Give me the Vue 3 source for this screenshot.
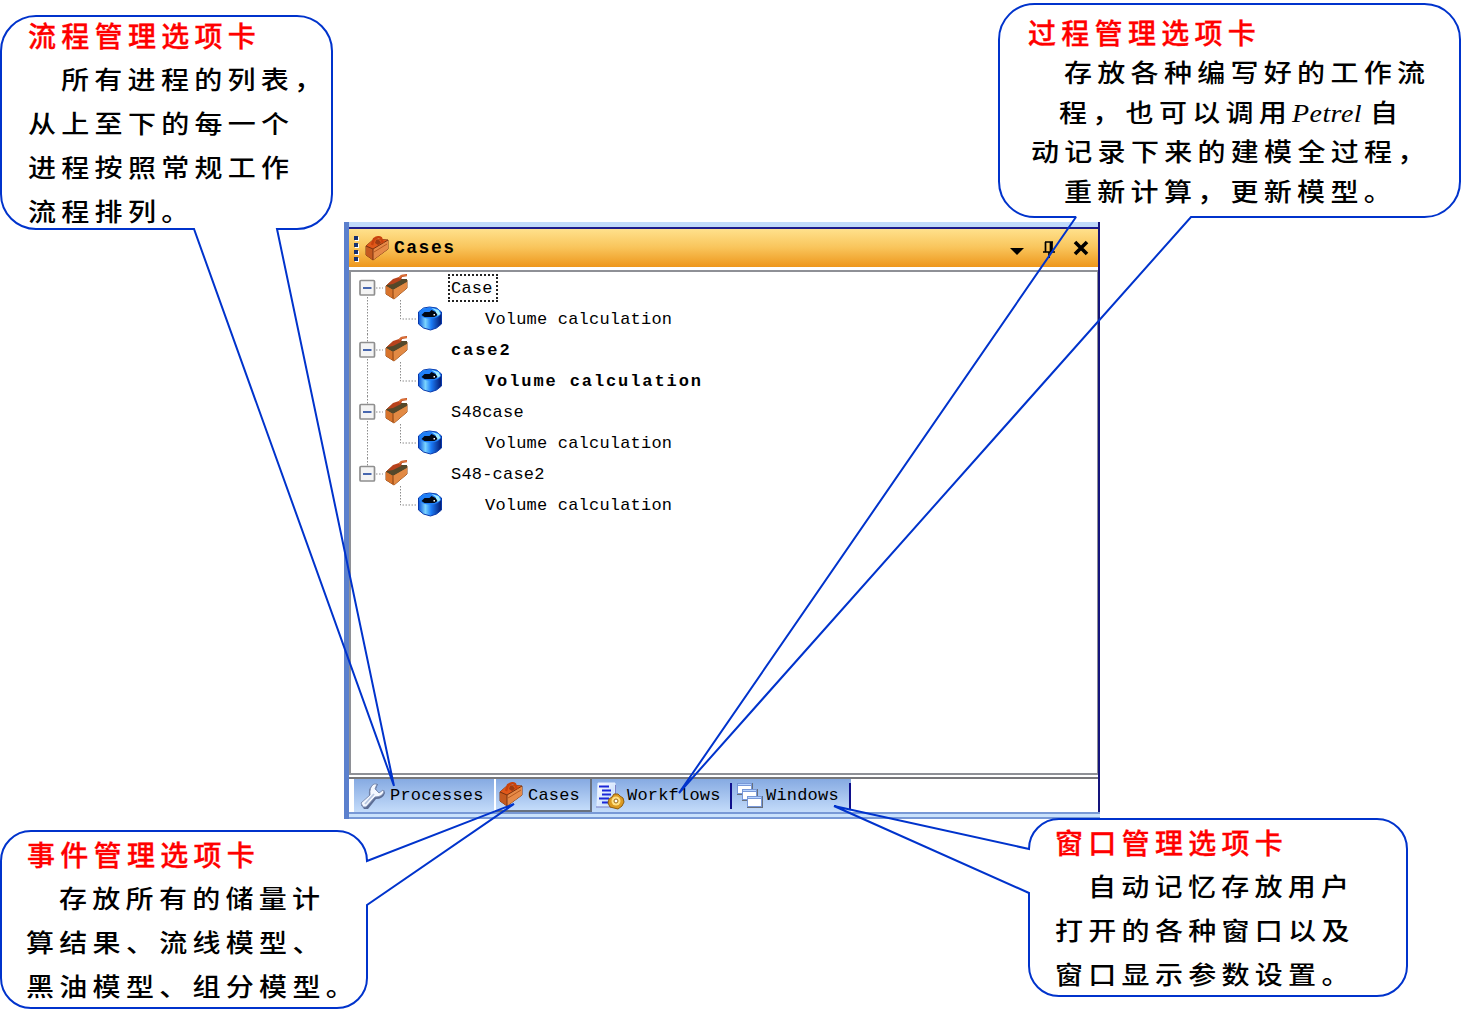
<script setup>
const cases = [
  { name: 'Case', focused: true },
  { name: 'case2', bold: true },
  { name: 'S48case' },
  { name: 'S48-case2' }
]

const callouts = [
  {
    id: 'process', left: 28, top: 14, title: '流程管理选项卡', titleHeight: 43, lineHeight: 44,
    lines: [
      { text: '所有进程的列表，', indent: 33 },
      { text: '从上至下的每一个', indent: 0 },
      { text: '进程按照常规工作', indent: 0 },
      { text: '流程排列。', indent: 0 }
    ]
  },
  {
    id: 'workflow', left: 1028, top: 11, title: '过程管理选项卡', titleHeight: 42, lineHeight: 39.7,
    lines: [
      { text: '存放各种编写好的工作流', indent: 36 },
      { text: '程，也可以调用', latin: 'Petrel', tail: '自', indent: 31 },
      { text: '动记录下来的建模全过程，', indent: 3 },
      { text: '重新计算，更新模型。', indent: 36 }
    ]
  },
  {
    id: 'event', left: 27, top: 833, title: '事件管理选项卡', titleHeight: 43, lineHeight: 44,
    lines: [
      { text: '存放所有的储量计', indent: 32 },
      { text: '算结果、流线模型、', indent: -1 },
      { text: '黑油模型、组分模型。', indent: -1 }
    ]
  },
  {
    id: 'window', left: 1055, top: 821, title: '窗口管理选项卡', titleHeight: 43, lineHeight: 44,
    lines: [
      { text: '自动记忆存放用户', indent: 33 },
      { text: '打开的各种窗口以及', indent: 0 },
      { text: '窗口显示参数设置。', indent: 0 }
    ]
  }
]
</script>

<template>
  <main class="slide">
    <svg class="symbols" width="0" height="0">
      <defs>
        <linearGradient id="drum" x1="0" x2="1" y1="0" y2="0">
          <stop offset="0" stop-color="#0a50d8" />
          <stop offset=".3" stop-color="#7ad4ff" />
          <stop offset=".55" stop-color="#1c7cf8" />
          <stop offset="1" stop-color="#02186e" />
        </linearGradient>
        <linearGradient id="page" x1="0" x2="1" y1="0" y2="1">
          <stop offset="0" stop-color="#ffffff" />
          <stop offset="1" stop-color="#b4d2fa" />
        </linearGradient>
      </defs>
      <symbol id="toolbox" viewBox="0 0 24 25">
        <path d="M1 10 L9 3 L23 4 L23 13 L8 24 L1 19 Z" fill="#d4692a" stroke="#7e3a18" stroke-width="1" />
        <path d="M1 10 L9 3 L23 4 L8 13 Z" fill="#e0581a" />
        <path d="M1 10 L8 13 L8 24 L1 19 Z" fill="#c45a20" />
        <path d="M8 13 L23 4 L23 13 L8 24 Z" fill="#e68a48" />
        <path d="M1 10 L8 13 L23 4 M8 13 V24" fill="none" stroke="#7a3210" stroke-width="1" />
        <path d="M9 16 L22 8" stroke="#b85a20" stroke-width="1" />
        <path d="M7 9 L9 3 Q13 0 16 2 L18 7" fill="none" stroke="#c8420e" stroke-width="2.4" />
        <path d="M10 7 L11 4 Q13 3 15 5 L16 7 L13 9 Z" fill="#9c3c14" />
      </symbol>
      <symbol id="toolbox-open" viewBox="0 0 24 26">
        <path d="M1 12 L8 6 L22 6 L22 14 L9 25 L1 20 Z" fill="#d87a34" stroke="#8a4414" stroke-width="1" />
        <path d="M1 12 L9 5 L22 5 L22 8 L8 16 Z" fill="#54482a" />
        <path d="M1 12 L8 16 L9 25 L1 20 Z" fill="#d8742c" />
        <path d="M8 16 L22 8 L22 14 L9 25 Z" fill="#e28a44" />
        <path d="M8 16 V24" stroke="#8a4414" stroke-width="1" />
        <path d="M2 11 L8 5 L14 3 L16 1 L22 0 L22 2 L17 3 L16 6 L8 10 Z" fill="#b8421c" />
        <path d="M14 4 L17 1.500 L22 1.500" fill="none" stroke="#dc7034" stroke-width="1.600" />
      </symbol>
      <symbol id="drum-icon" viewBox="0 0 25 25">
        <path d="M1 6 L6 2 L12 1 L19 2 L24 6 L24 18 L19 22 L13 24 L6 22 L1 18 Z" fill="url(#drum)" stroke="#0838ac" stroke-width="1" />
        <ellipse cx="12.500" cy="7" rx="11" ry="5.500" fill="#2080f8" />
        <path d="M14 2 L21 4 L23 8 L20 10 L18 5 Z" fill="#9fecff" />
        <path d="M4 9 L7 6 L12 6 L14 4 L18 6 L20 9 L17 11 L7 11 Z" fill="#020813" />
        <rect x="16" y="8" width="1.500" height="1.500" fill="#fff" />
      </symbol>
    </svg>

    <section class="panel">
      <div class="window-edge"></div>
      <header class="titlebar">
        <span class="grip"><i v-for="n in 4" :key="n"></i></span>
        <svg class="title-icon" width="24" height="25"><use href="#toolbox" /></svg>
        <h1>Cases</h1>
        <svg class="controls" width="90" height="36" viewBox="0 0 90 36">
          <path d="M8 18 H22 L15 25 Z" fill="#000" />
          <path d="M43 12 H51 M43.500 12 V22 M50 12 V22 M48.500 12 V22 M41 22 H53 M47 22 V28" fill="none" stroke="#000" stroke-width="1.700" />
          <path d="M73 12 L85 24 M85 12 L73 24" stroke="#000" stroke-width="3.600" />
        </svg>
      </header>

      <div class="list">
        <div v-for="(item, index) in cases" :key="item.name" class="case" :class="{ bold: item.bold }">
          <div class="row">
            <svg width="100" height="31" viewBox="0 0 100 31">
              <g fill="none" stroke="#8c8c8c" stroke-dasharray="1.500 1.500">
                <path v-if="index > 0" d="M16.500 0 V8" />
                <path v-if="index < cases.length - 1" d="M16.500 25 V31" />
                <path d="M25 16 H32" />
                <path d="M49.500 28 V31" />
              </g>
              <rect x="9" y="8.500" width="14.500" height="14.500" rx="1" fill="#f4f4f4" stroke="#8f8f8f" stroke-width="1.700" />
              <path d="M12 16 H20.500" stroke="#3457a8" stroke-width="1.800" />
              <use href="#toolbox-open" x="34" y="2" width="24" height="26" />
            </svg>
            <span :class="{ focused: item.focused }">{{ item.name }}</span>
          </div>
          <div class="row">
            <svg width="134" height="31" viewBox="0 0 134 31">
              <g fill="none" stroke="#8c8c8c" stroke-dasharray="1.500 1.500">
                <path v-if="index < cases.length - 1" d="M16.500 0 V31" />
                <path d="M49.500 0 V16 H66" />
              </g>
              <use href="#drum-icon" x="66.500" y="3" width="25" height="25" />
            </svg>
            <span>Volume calculation</span>
          </div>
        </div>
      </div>

      <nav class="tabs">
        <div class="tab processes">
          <svg width="28" height="28" viewBox="0 0 28 28">
            <path d="M5 27 L2 23 L10 14 Q9 5 15 2 L19 2 L17 7 L20 11 L25 8 L26 11 Q24 17 17 17 L9 27 Z" fill="#5c6d94" />
            <path d="M4 25 L2 21 L11 13 Q10 5 15 2 L18 2 L16 7 L20 11 L24 8 L25 10 Q23 15 16 15 L7 25 Z" fill="#f4f8ff" stroke="#8090b4" stroke-width="1" />
            <path d="M6 22 L15 12" stroke="#b6c5e0" stroke-width="1.800" />
          </svg>
          <span>Processes</span>
        </div>
        <div class="tab active">
          <svg width="24" height="25"><use href="#toolbox" /></svg>
          <span>Cases</span>
        </div>
        <div class="tab workflows">
          <svg width="30" height="28" viewBox="0 0 30 28">
            <path d="M3 1 H20 V24 H2 Z" fill="url(#page)" stroke="#e4efff" />
            <path d="M4 4.500 H14 M7 8.500 H16 M7 12.500 H16 M4 16.500 H14 M7 20.500 H16" stroke="#1b28d8" stroke-width="2" />
            <path d="M1 25 H16 M20.500 3 V12" stroke="#7c82c8" />
            <path d="M19 12 L23 12 L25 14 L28 16 L29 20 L27 24 L23 27 L19 26 L15 25 L13 21 L14 17 L17 15 Z" fill="#dc9a22" stroke="#8e5c0c" />
            <circle cx="21" cy="19" r="4.500" fill="#ffe184" />
            <circle cx="21" cy="19" r="2" fill="#fff" stroke="#9a6410" />
          </svg>
          <span>Workflows</span>
        </div>
        <div class="tab windows">
          <svg width="28" height="28" viewBox="0 0 28 28">
            <g v-for="(p, i) in [[1, 1], [6, 7], [11, 14]]" :key="i" :transform="`translate(${p[0]} ${p[1]})`">
              <path d="M0 0 H16 V12 H0 Z" fill="#68707c" />
              <path d="M0 0 H15 V11 H0 Z" fill="#7898d8" />
              <path d="M1 3 H14 V10 H1 Z" fill="#ffffff" />
              <path d="M1 1.500 H14" stroke="#b8d4ff" />
            </g>
          </svg>
          <span>Windows</span>
        </div>
      </nav>
      <div class="status-edge"></div>
    </section>

    <svg class="outlines" width="1461" height="1028" viewBox="0 0 1461 1028">
      <path d="M36 16 H297 A35 35 0 0 1 332 51 V194 A35 35 0 0 1 297 229 H277 L394 786 L194 229 H36 A35 35 0 0 1 1 194 V51 A35 35 0 0 1 36 16 Z" />
      <path d="M1034.500 4 H1424.500 A35.500 35.500 0 0 1 1460 39.500 V181.500 A35.500 35.500 0 0 1 1424.500 217 H1191 L679 793 L1076 217 H1034.500 A35.500 35.500 0 0 1 999 181.500 V39.500 A35.500 35.500 0 0 1 1034.500 4 Z" />
      <path d="M31 831 H337 A30 30 0 0 1 367 861 L514 804 L367 905 V978 A30 30 0 0 1 337 1008 H31 A30 30 0 0 1 1 978 V861 A30 30 0 0 1 31 831 Z" />
      <path d="M1059 819 H1377 A30 30 0 0 1 1407 849 V966 A30 30 0 0 1 1377 996 H1059 A30 30 0 0 1 1029 966 V893 L834 806 L1029 849 A30 30 0 0 1 1059 819 Z" />
    </svg>

    <article
      v-for="c in callouts"
      :key="c.id"
      class="callout"
      :style="{ left: c.left + 'px', top: c.top + 'px' }"
    >
      <h2 :style="{ lineHeight: c.titleHeight + 'px' }">{{ c.title }}</h2>
      <p
        v-for="line in c.lines"
        :key="line.text"
        :style="{ height: c.lineHeight + 'px', lineHeight: c.lineHeight + 'px', marginLeft: line.indent + 'px' }"
      >{{ line.text }}<em v-if="line.latin">{{ line.latin }}</em>{{ line.tail }}</p>
    </article>
  </main>
</template>

<style>
body {
  margin: 0;
  background: #fff;
}
</style>

<style scoped>
.slide {
  position: relative;
  width: 1461px;
  height: 1028px;
  overflow: hidden;
  background: #fff;
}

.symbols {
  position: absolute;
}

.panel {
  position: absolute;
  left: 344px;
  top: 222px;
  box-sizing: border-box;
  display: flex;
  flex-direction: column;
  width: 756px;
  height: 597px;
  border-left: 5px solid #5b80cd;
  background: linear-gradient(#14147c, #14147c) right top / 2px 590px no-repeat #fff;
  color: #000;
  font: 17px/31px "Liberation Mono", monospace;
  letter-spacing: 0.2px;
}

.window-edge {
  height: 5px;
  margin-right: 2px;
  background: #c0dafa;
  border-bottom: 2px solid #1c1c8c;
}

.titlebar {
  display: flex;
  align-items: center;
  box-sizing: border-box;
  height: 38px;
  margin-right: 2px;
  padding-left: 5px;
  background: linear-gradient(#ffe18c, #f9c55c 48%, #ee971c);
}

.grip {
  display: flex;
  flex-direction: column;
  gap: 3px;
}

.grip i {
  width: 4px;
  height: 4px;
  background: #17306f;
  box-shadow: 1px 1px #fff;
}

.title-icon {
  margin-left: 7px;
}

h1 {
  flex: 1;
  margin: 0 0 0 5px;
  font-size: 18px;
  font-weight: bold;
  line-height: 36px;
  letter-spacing: 1.5px;
}

.controls {
  margin-right: 6px;
}

.list {
  box-sizing: border-box;
  height: 505px;
  margin: 3px 2px 0 0;
  border: 2px solid #8e9096;
  border-right-width: 1px;
}

.row {
  display: flex;
  align-items: center;
  height: 31px;
}

.row svg {
  flex: none;
}

.row span {
  position: relative;
  top: 1px;
  white-space: pre;
}

.bold {
  font-weight: bold;
  letter-spacing: 1.9px;
}

.row .focused {
  margin-left: -2px;
  padding: 0 4px 0 2px;
  height: 26px;
  line-height: 27px;
  top: 0;
  outline: 2px dotted #222;
  outline-offset: -1px;
}

.tabs {
  display: flex;
  box-sizing: border-box;
  height: 35px;
  margin: 2px 2px 0 0;
  padding-left: 5px;
  border-top: 2px solid #77777a;
}

.tab {
  display: flex;
  align-items: center;
  box-sizing: border-box;
  height: 33px;
  background: linear-gradient(#86aae2, #c4dcfa);
}

.processes {
  width: 140px;
  padding-left: 5px;
  gap: 3px;
}

.active {
  width: 98px;
  padding-left: 3px;
  gap: 5px;
  border-left: 2px solid #fff;
  border-right: 2px solid #68717f;
  border-bottom: 2px solid #68717f;
}

.active span {
  position: relative;
  top: 1px;
}

.workflows {
  width: 140px;
  padding-left: 3px;
  gap: 2px;
}

.windows {
  width: 119px;
  padding-left: 4px;
  gap: 2px;
}

.workflows,
.windows {
  background:
    linear-gradient(#10108c, #10108c) right 0 center / 2px 26px no-repeat,
    linear-gradient(#86aae2, #c4dcfa);
}

.status-edge {
  height: 3px;
  border-top: 2px solid #7899d6;
  border-bottom: 2px solid #7899d6;
  background: #cae2fc;
}

.outlines {
  position: absolute;
  inset: 0;
  fill: none;
  stroke: #0033cc;
  stroke-width: 2;
  stroke-linejoin: miter;
  stroke-miterlimit: 2;
}

.callout {
  position: absolute;
  color: #000;
  font-family: "Noto Sans CJK SC", sans-serif;
  font-size: 28px;
  letter-spacing: 5.3px;
  white-space: nowrap;
}

.callout h2 {
  margin: 0;
  color: #f00;
  font-size: 28px;
  font-weight: 500;
  -webkit-text-stroke: 0.3px #f00;
}

.callout p {
  margin: 0;
  font-weight: 500;
  transform: translateY(-1px) scaleY(0.88);
}

.callout em {
  margin-right: 8px;
  font-family: "Liberation Serif", serif;
  font-size: 28px;
  font-weight: 400;
  letter-spacing: 0.4px;
}
</style>
